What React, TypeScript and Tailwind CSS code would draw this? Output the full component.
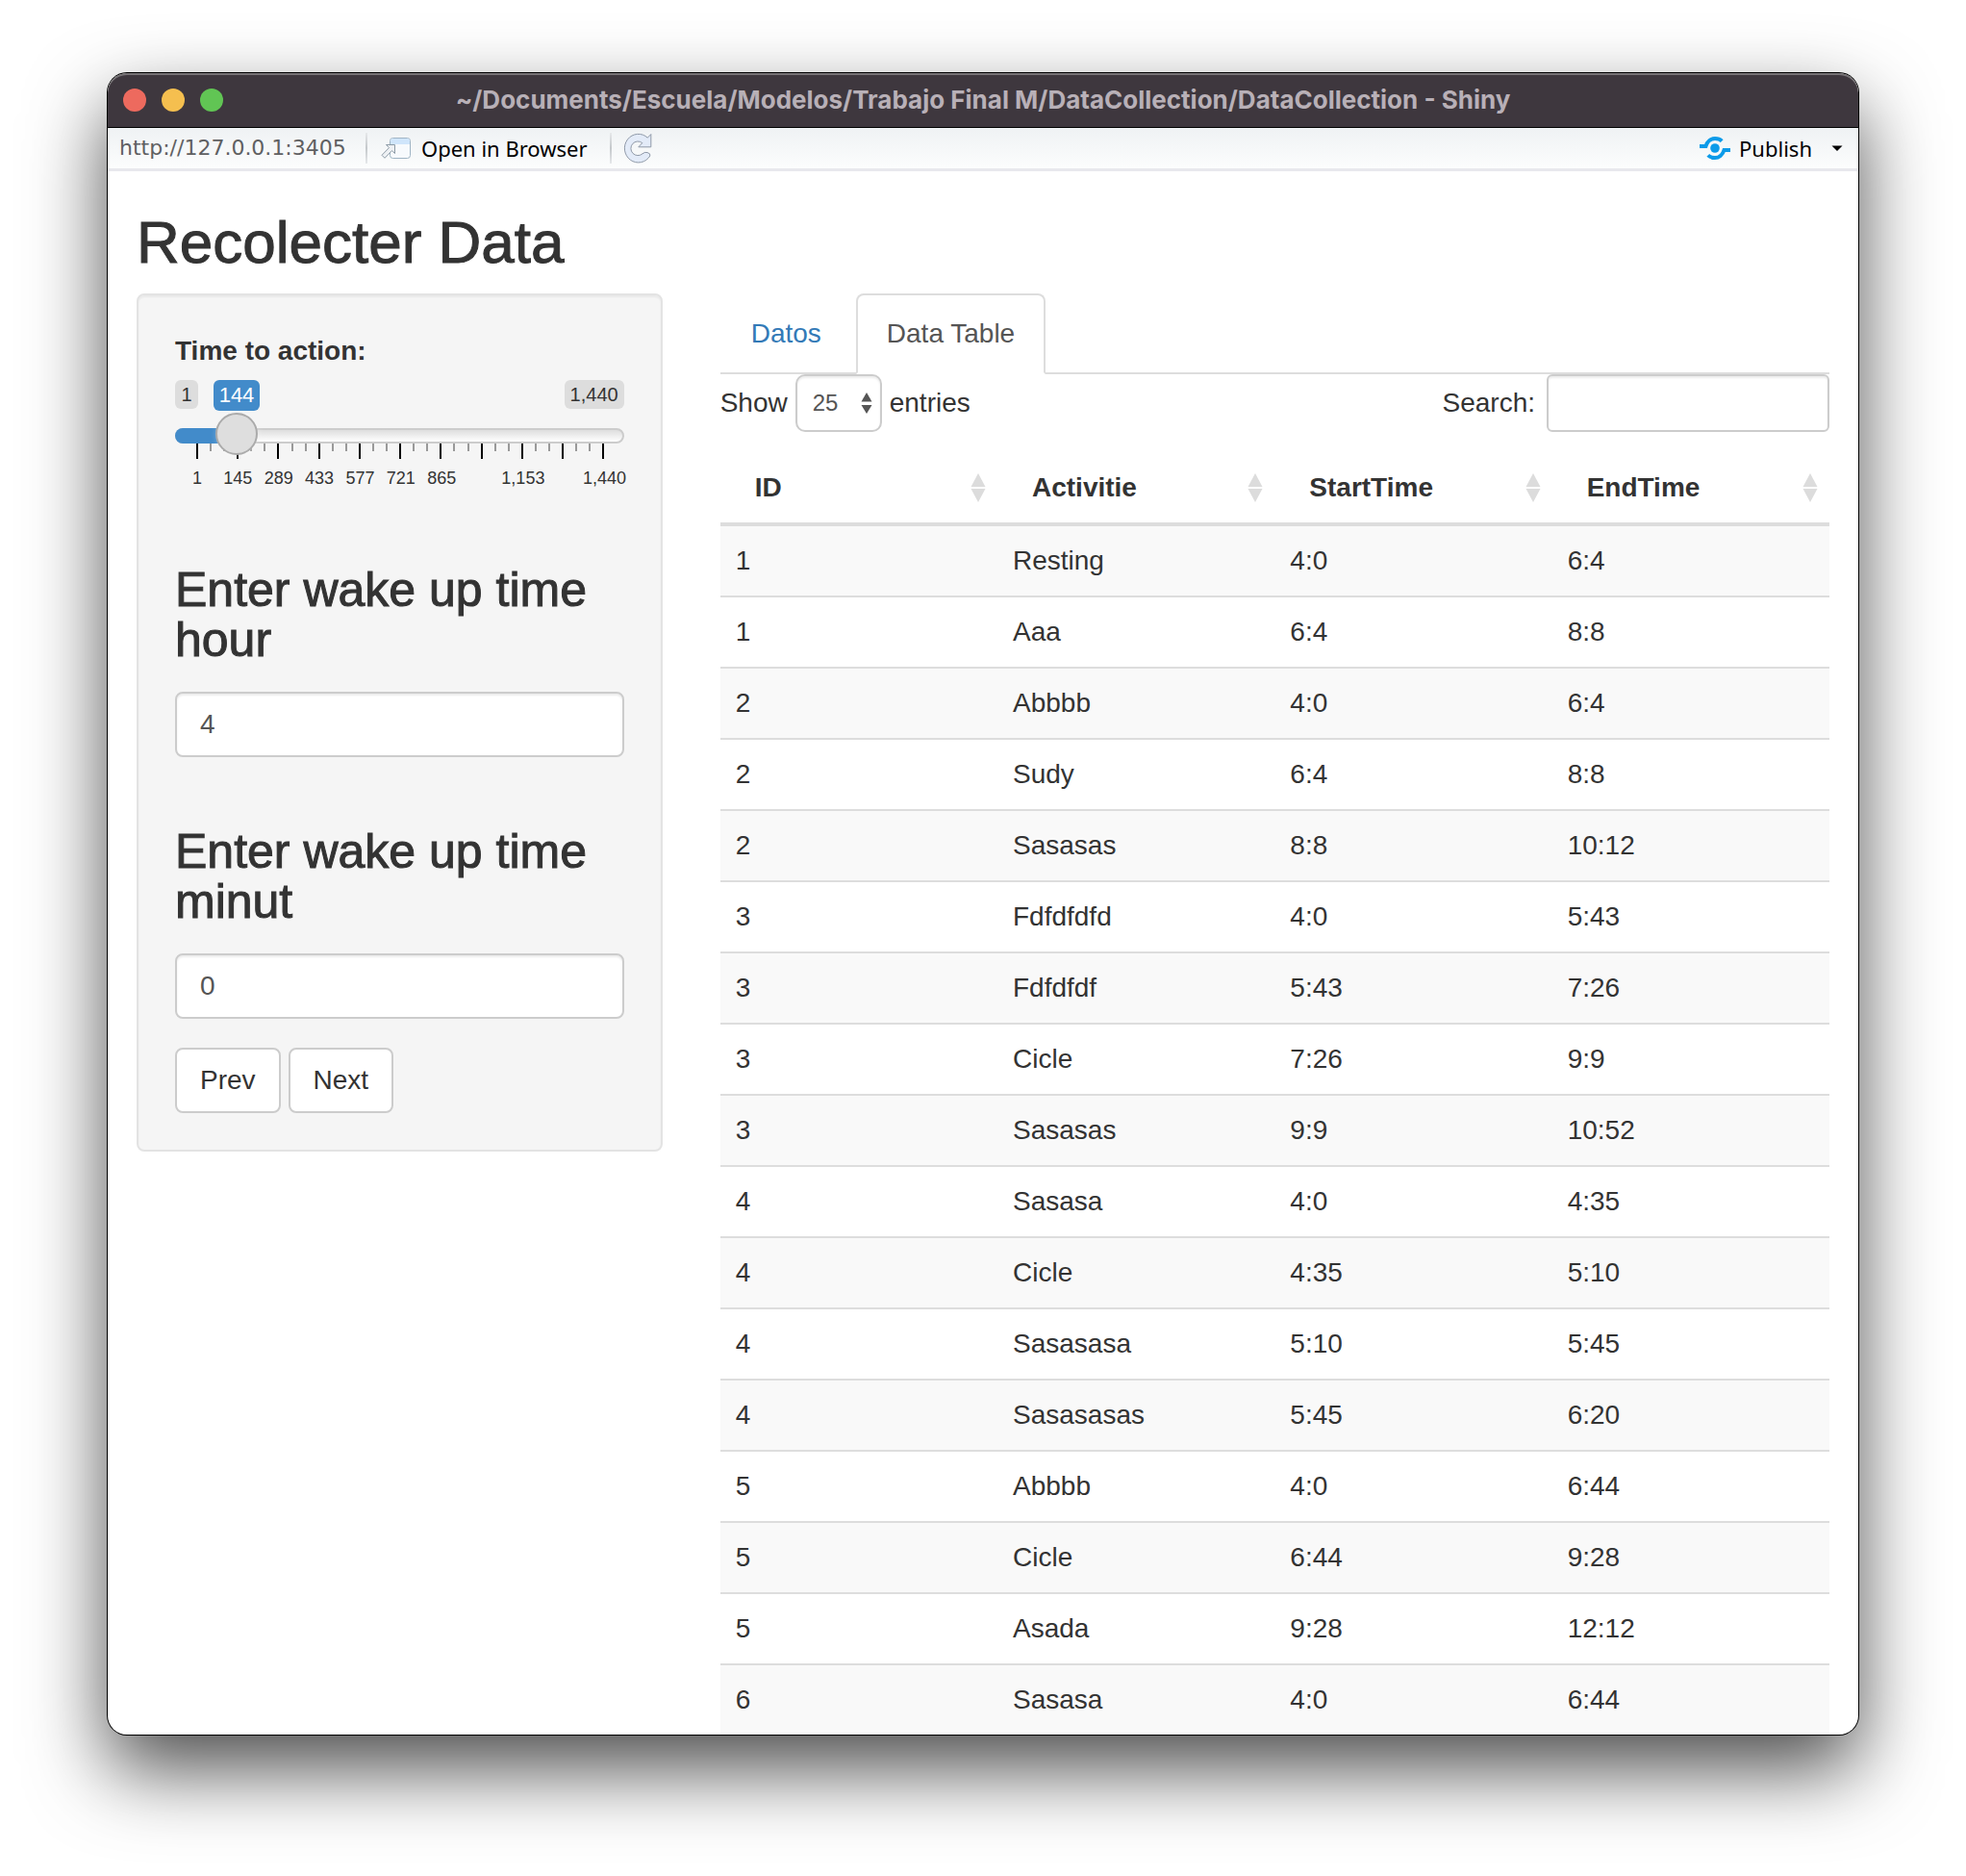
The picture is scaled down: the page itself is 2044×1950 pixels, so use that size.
import { useState } from "react";

type Row = [string, string, string, string];

const columns = ["ID", "Activitie", "StartTime", "EndTime"];

const rows: Row[] = [
  ["1", "Resting", "4:0", "6:4"],
  ["1", "Aaa", "6:4", "8:8"],
  ["2", "Abbbb", "4:0", "6:4"],
  ["2", "Sudy", "6:4", "8:8"],
  ["2", "Sasasas", "8:8", "10:12"],
  ["3", "Fdfdfdfd", "4:0", "5:43"],
  ["3", "Fdfdfdf", "5:43", "7:26"],
  ["3", "Cicle", "7:26", "9:9"],
  ["3", "Sasasas", "9:9", "10:52"],
  ["4", "Sasasa", "4:0", "4:35"],
  ["4", "Cicle", "4:35", "5:10"],
  ["4", "Sasasasa", "5:10", "5:45"],
  ["4", "Sasasasas", "5:45", "6:20"],
  ["5", "Abbbb", "4:0", "6:44"],
  ["5", "Cicle", "6:44", "9:28"],
  ["5", "Asada", "9:28", "12:12"],
  ["6", "Sasasa", "4:0", "6:44"],
];

const tickLabels = ["1", "145", "289", "433", "577", "721", "865", "", "1,153", "", "1,440"];
const ticks = Array.from({ length: 31 }, (_, i) => i % 3 === 0);

function OpenWindowIcon() {
  return (
    <svg width="32" height="24" viewBox="0 0 32 24" aria-hidden="true">
      <rect x="9.5" y="1.5" width="21" height="21" rx="3" fill="#f7fafd" stroke="#9fb4c4" />
      <path d="M10 8V4.500Q10 2 12.500 2H27.500Q30 2 30 4.500V8Z" fill="#cfe5fb" />
      <path
        d="M5.500 8.500H14.500V17.500L11.500 14.600L4 22.300L1 19.300L8.500 11.600Z"
        fill="#eef1f4"
        stroke="#8d9ba6"
        strokeLinejoin="round"
      />
    </svg>
  );
}

function RefreshIcon() {
  return (
    <svg width="30" height="32" viewBox="0 0 30 32" aria-hidden="true">
      <path
        d="M28.800 1.500V14.800H15.800L19.800 10.600A7.300 7.300 0 1 0 20 21.800Q22 19.800 25 20.500Q28.600 21.500 27.800 24A14.300 14.800 0 1 1 25.300 5.200Z"
        fill="#e3ebf8"
        stroke="#8f99a8"
        strokeLinejoin="round"
      />
    </svg>
  );
}

function PublishIcon() {
  return (
    <svg width="34" height="26" viewBox="0 0 34 26" fill="none" stroke="#0c9be9" strokeWidth="4" aria-hidden="true">
      <path d="M1 11H7.500C9 6 13 3 17 3C20 3 22.500 3.900 24.200 5.600" />
      <path d="M33 15H26.500C25 20 21 23 17 23C14 23 11.500 22.100 9.800 20.400" />
      <circle cx="17" cy="13" r="4.800" fill="#0c9be9" stroke="none" />
    </svg>
  );
}

function SortIcon() {
  return (
    <svg width="16" height="30" viewBox="0 0 16 30" fill="#dcdcdc" aria-hidden="true">
      <path d="M8 0L15.500 14H0.500Z" />
      <path d="M8 30L15.500 16H0.500Z" />
    </svg>
  );
}

function Divider() {
  return <span className="h-8 w-[2px] bg-gradient-to-b from-[#e6e8ea] via-[#c4c8cb] to-[#e6e8ea]" />;
}

function TitleBar() {
  return (
    <header className="grid h-[57px] grid-cols-[1fr_auto_1fr] items-center rounded-t-[20px] border-b border-black bg-[#3e373e] px-4 shadow-[inset_0_2px_0_#777376]">
      <div className="flex gap-4">
        <button aria-label="Close" className="size-6 rounded-full bg-[#ed6a5e]" />
        <button aria-label="Minimize" className="size-6 rounded-full bg-[#f5bf4f]" />
        <button aria-label="Zoom" className="size-6 rounded-full bg-[#61c554]" />
      </div>
      <div className="font-[Inter,sans-serif] text-[26px] leading-8 font-bold whitespace-nowrap text-[#b8b0b7]">
        ~/Documents/Escuela/Modelos/Trabajo Final M/DataCollection/DataCollection - Shiny
      </div>
    </header>
  );
}

function Toolbar() {
  return (
    <div className="flex h-[45px] items-center border-b-3 border-[#e8e8ed] bg-gradient-to-b from-[#eff2f4] to-[#fcfdfd] pr-4 pl-3 font-['Noto_Sans',sans-serif] text-[22px] leading-8 whitespace-nowrap text-black">
      <span className="w-[256px] font-['DejaVu_Sans',sans-serif] text-[#5f6062]">http://127.0.0.1:3405</span>
      <Divider />
      <button className="flex items-center gap-2.5 pr-5 pl-3.5">
        <OpenWindowIcon />
        <span className="w-[176px] text-left">Open in Browser</span>
      </button>
      <Divider />
      <button aria-label="Reload" className="ml-3">
        <RefreshIcon />
      </button>
      <button className="ml-auto flex items-center gap-2">
        <PublishIcon />
        Publish
      </button>
      <button aria-label="Publish options" className="ml-5">
        <svg width="12" height="6" viewBox="0 0 12 6" aria-hidden="true">
          <path d="M0.500 0.500H11.500L6 6Z" />
        </svg>
      </button>
    </div>
  );
}

function TimeSlider() {
  const [value, setValue] = useState(144);
  const percent = ((value - 1) / 1439) * 100;
  return (
    <div>
      <label htmlFor="time" className="block font-bold">
        Time to action:
      </label>
      <div className="mt-2.5 grid text-xl leading-[30px]">
        <div className="col-start-1 row-start-1 flex items-start justify-between">
          <span className="w-6 rounded-md bg-[#dddddd] text-center">1</span>
          <span className="rounded-md bg-[#dddddd] px-1.5">1,440</span>
        </div>
        <div className="col-start-1 row-start-1 flex px-[22px]">
          <div style={{ width: `${percent}%` }} className="shrink-0" />
          <output
            htmlFor="time"
            className="-ml-6 w-12 shrink-0 rounded-md bg-[#428bca] text-center text-[22px] leading-8 text-white"
          >
            {value}
          </output>
        </div>
      </div>
      <div className="mt-[2px] grid">
        <div className="col-start-1 row-start-1 mt-4 h-4 overflow-hidden rounded-full border-2 border-[#cccccc] bg-gradient-to-b from-[#dedede] to-white" />
        <div className="col-start-1 row-start-1 mt-4 flex h-4 pr-[22px]">
          <div className="w-[22px] rounded-l-full bg-[#428bca]" />
          <div className="flex-1">
            <div className="h-4 bg-[#428bca]" style={{ width: `${percent}%` }} />
          </div>
        </div>
        <div className="col-start-1 row-start-1 mt-8 flex h-4 justify-between pr-5 pl-[22px]">
          {ticks.map((major, i) => (
            <span key={i} className={major ? "h-4 w-[2px] bg-black" : "h-2 w-[2px] bg-[#999999]"} />
          ))}
        </div>
        <input
          id="time"
          type="range"
          min={1}
          max={1440}
          value={value}
          onChange={(e) => setValue(Number(e.target.value))}
          className="z-10 col-start-1 row-start-1 h-11 w-full appearance-none bg-transparent [&::-webkit-slider-thumb]:size-11 [&::-webkit-slider-thumb]:appearance-none [&::-webkit-slider-thumb]:rounded-full [&::-webkit-slider-thumb]:border-2 [&::-webkit-slider-thumb]:border-[#ababab] [&::-webkit-slider-thumb]:bg-[#dedede] [&::-webkit-slider-thumb]:shadow-[1px_1px_6px_rgba(255,255,255,0.3)]"
        />
      </div>
      <div className="mt-2 flex justify-between pr-5 pl-[23px] text-lg leading-6">
        {tickLabels.map((label, i) => (
          <span key={i} className="flex w-0 justify-center whitespace-nowrap">
            {label}
          </span>
        ))}
      </div>
    </div>
  );
}

function NumberField({ id, label, initial }: { id: string; label: string; initial: string }) {
  const [value, setValue] = useState(initial);
  return (
    <div>
      <label htmlFor={id} className="block text-[50px] leading-[52px] [-webkit-text-stroke:1px_#333333]">
        {label}
      </label>
      <input
        id={id}
        type="text"
        inputMode="numeric"
        value={value}
        onChange={(e) => setValue(e.target.value)}
        className="mt-7 block h-[68px] w-full rounded-lg border-2 border-[#cccccc] bg-white px-6 text-[#555555] shadow-[inset_0_2px_2px_rgba(0,0,0,0.075)]"
      />
    </div>
  );
}

function Sidebar() {
  const button = "h-[68px] rounded-lg border-2 border-[#cccccc] bg-white px-6 text-[#333333]";
  return (
    <form
      onSubmit={(e) => e.preventDefault()}
      className="rounded-lg border-2 border-[#e3e3e3] bg-[#f5f5f5] p-[38px] shadow-[inset_0_2px_2px_rgba(0,0,0,0.05)]"
    >
      <TimeSlider />
      <div className="mt-[78px] space-y-[72px]">
        <NumberField id="hour" label="Enter wake up time hour" initial="4" />
        <NumberField id="minute" label="Enter wake up time minut" initial="0" />
      </div>
      <div className="mt-[30px] flex gap-2">
        <button className={button}>Prev</button>
        <button className={button}>Next</button>
      </div>
    </form>
  );
}

function TableControls() {
  return (
    <div className="flex items-center justify-between">
      <div className="flex items-center gap-2">
        <label htmlFor="length">Show</label>
        <div className="grid items-center">
          <select
            id="length"
            defaultValue="25"
            className="col-start-1 row-start-1 h-[60px] w-[90px] appearance-none rounded-[10px] border-2 border-[#cccccc] bg-white px-4 text-2xl text-[#555555] shadow-[inset_0_2px_2px_rgba(0,0,0,0.075)]"
          >
            <option>10</option>
            <option>25</option>
            <option>50</option>
            <option>100</option>
          </select>
          <svg
            width="12"
            height="24"
            viewBox="0 0 12 24"
            fill="#555555"
            aria-hidden="true"
            className="pointer-events-none col-start-1 row-start-1 mr-2.5 justify-self-end"
          >
            <path d="M6 1L11.500 10.500H0.500Z" />
            <path d="M6 23L11.500 14H0.500Z" />
          </svg>
        </div>
        <label htmlFor="length">entries</label>
      </div>
      <div className="flex items-center gap-3">
        <label htmlFor="search">Search:</label>
        <input
          id="search"
          type="search"
          className="h-[60px] w-[294px] rounded-md border-2 border-[#cccccc] bg-white px-5 text-2xl text-[#555555] shadow-[inset_0_2px_2px_rgba(0,0,0,0.075)]"
        />
      </div>
    </div>
  );
}

function DataTable() {
  return (
    <table className="mt-[22px] w-full table-fixed border-separate border-spacing-0 text-left">
      <thead>
        <tr>
          {columns.map((name) => (
            <th key={name} scope="col" className="border-b-4 border-[#dddddd] py-4 pr-3 pl-9 font-bold">
              <button className="flex h-10 w-full items-center justify-between">
                {name}
                <SortIcon />
              </button>
            </th>
          ))}
        </tr>
      </thead>
      <tbody className="[&>tr:nth-child(odd)]:bg-[#f9f9f9] [&>tr:not(:first-child)>td]:border-t-2">
        {rows.map((row, i) => (
          <tr key={i}>
            {row.map((cell, j) => (
              <td key={j} className="border-[#dddddd] p-4">
                {cell}
              </td>
            ))}
          </tr>
        ))}
      </tbody>
    </table>
  );
}

function Tabs() {
  return (
    <nav className="flex items-end gap-1 border-b-2 border-[#dddddd]">
      <a href="#datos" className="px-8 pt-[22px] pb-5 text-[#337ab7]">
        Datos
      </a>
      <a
        href="#data-table"
        aria-current="page"
        className="-mb-[2px] rounded-t-lg border-2 border-[#dddddd] border-b-white bg-white px-[30px] py-5 text-[#555555]"
      >
        Data Table
      </a>
    </nav>
  );
}

export default function App() {
  return (
    <div className="bg-white px-28 pt-[76px] pb-[147px] font-['Liberation_Sans',Arial,sans-serif] text-[28px] leading-10 text-[#333333]">
      <div className="overflow-hidden rounded-[20px] bg-white shadow-[0_0_0_1px_#000000,0_36px_82px_rgba(0,0,0,0.7)]">
        <TitleBar />
        <Toolbar />
        <h1 className="mt-[41px] px-[30px] text-[62px] leading-[66px] [-webkit-text-stroke:1px_#333333]">
          Recolecter Data
        </h1>
        <div className="mt-5 grid grid-cols-3 items-start">
          <aside className="px-[30px]">
            <Sidebar />
          </aside>
          <main className="col-span-2 px-[30px]">
            <Tabs />
            <TableControls />
            <DataTable />
          </main>
        </div>
      </div>
    </div>
  );
}
